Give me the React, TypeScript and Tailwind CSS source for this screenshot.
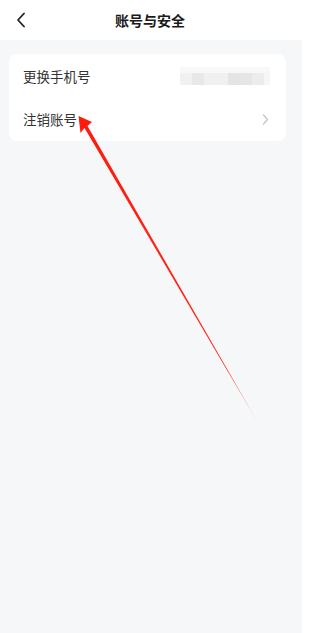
import React from "react";

export default function App() {
  const blocks = [
    { w: 12, c: "#f1f1f1" },
    { w: 12, c: "#e8e8e8" },
    { w: 24, c: "#f0f0f0" },
    { w: 12, c: "#e4e4e4" },
    { w: 12, c: "#e6e6e6" },
    { w: 12, c: "#ececec" },
    { w: 6, c: "#f6f6f6" },
  ];
  return (
    <div
      className="relative w-[302px] h-[633px] bg-[#f6f7f9] overflow-hidden"
      style={{ fontFamily: '"Noto Sans CJK SC", "Noto Sans", sans-serif' }}
    >
      <div className="h-[40px] bg-white flex items-center relative">
        <div className="w-[40px] flex items-center justify-center pl-[2px]">
          <svg width="10" height="16" viewBox="0 0 10 16" fill="none">
            <path d="M8 1.5L2 8l6 6.5" stroke="#222" strokeWidth="1.8" strokeLinecap="round" strokeLinejoin="round" />
          </svg>
        </div>
        <div className="absolute left-0 right-0 text-center text-[14px] font-bold text-[#1a1a1a] pointer-events-none leading-[40px] pr-[2px]">
          账号与安全
        </div>
      </div>
      <div className="mt-[14px] mx-[9px] w-[277px] bg-white rounded-[8px] flex flex-col">
        <div className="h-[44px] flex items-center justify-between pl-[14px] pr-[16px]">
          <span className="text-[13.5px] text-[#333]">更换手机号</span>
          <div className="flex flex-col">
            <div className="h-[6px] w-[90px] bg-[#f8f8f8]" />
            <div className="flex h-[12px]">
              {blocks.map((b, i) => (
                <div key={i} style={{ width: b.w, background: b.c }} />
              ))}
            </div>
          </div>
        </div>
        <div className="h-[43px] flex items-center justify-between pl-[14px] pr-[17px]">
          <span className="text-[13.5px] text-[#333]">注销账号</span>
          <svg width="7" height="11" viewBox="0 0 7 11" fill="none">
            <path d="M1.5 1L5.5 5.5 1.5 10" stroke="#c4c4c4" strokeWidth="1.3" strokeLinecap="round" strokeLinejoin="round" />
          </svg>
        </div>
      </div>
      <svg className="absolute left-0 top-0 pointer-events-none" width="302" height="633" viewBox="0 0 302 633">
        <defs>
          <linearGradient id="ag" x1="79" y1="117" x2="261" y2="428" gradientUnits="userSpaceOnUse">
            <stop offset="0" stopColor="#ff1a0e" />
            <stop offset="0.8" stopColor="#ff2a1a" />
            <stop offset="1" stopColor="#ff2a1a" stopOpacity="0.1" />
          </linearGradient>
        </defs>
        <polygon
          points="78.5,116 92,122 87.5,126 261,428 84.5,128 80.5,133"
          fill="url(#ag)"
        />
      </svg>
    </div>
  );
}
